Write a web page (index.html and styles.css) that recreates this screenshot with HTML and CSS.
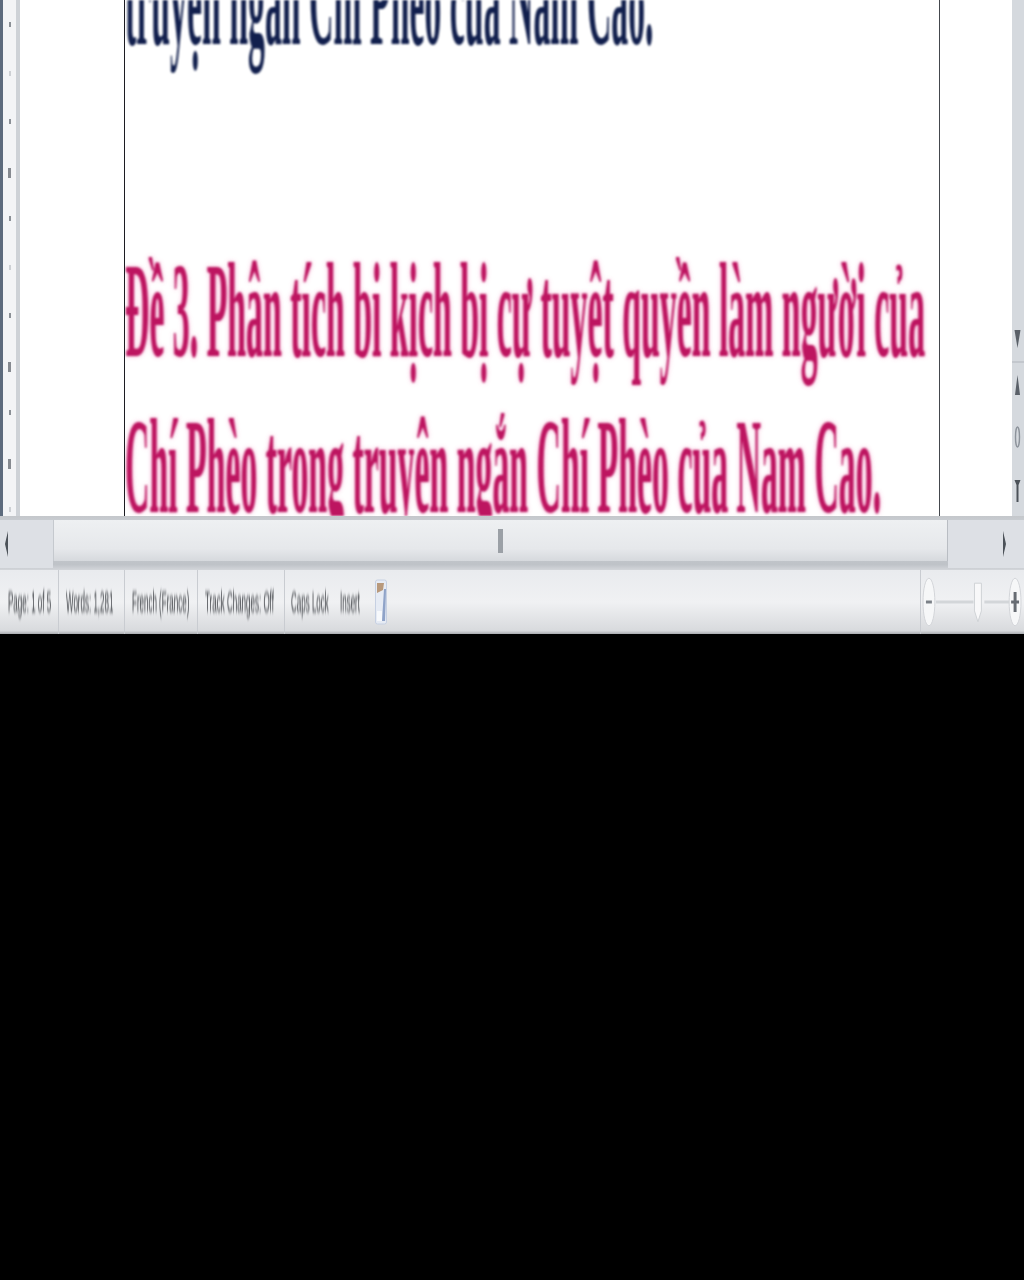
FILE: index.html
```html
<!DOCTYPE html>
<html lang="vi">
<head>
<meta charset="utf-8">
<title>Document</title>
<link rel="stylesheet" href="styles.css">
</head>
<body>
<div class="app">
  <div class="workspace">
    <div class="ruler">
      <i class="tick"></i><i class="tick light"></i><i class="tick"></i><i class="tick num"></i><i class="tick"></i><i class="tick light"></i><i class="tick"></i><i class="tick num"></i><i class="tick"></i><i class="tick num"></i><i class="tick light"></i>
    </div>
    <div class="gutter-left"></div>
    <div class="page">
      <div class="page-blur">
        <div class="page-text">
          <p class="line navy">truyện ngắn Chí Phèo của Nam Cao.</p>
          <p class="line">&nbsp;</p>
          <p class="line pink">Đề 3. Phân tích bi kịch bị cự tuyệt quyền làm người của</p>
          <p class="line pink">Chí Phèo trong truyện ngắn Chí Phèo của Nam Cao.</p>
        </div>
      </div>
    </div>
    <div class="gutter-right"></div>
    <div class="vscroll">
      <svg class="varrows" viewBox="0 0 12 190" width="12" height="190">
        <path d="M2.500 10h6l-3 18z" fill="#5a6068"/>
        <path d="M0 42h12" stroke="#bcc1c7" stroke-width="1.500"/>
        <path d="M5.500 55l2.500 20h-5z" fill="#5a6068"/>
        <ellipse cx="5.500" cy="117" rx="2" ry="10" fill="none" stroke="#8d939b" stroke-width="1.400"/>
        <path d="M2.500 160h6l-2 5v17h-2v-17z" fill="#4c5259"/>
      </svg>
    </div>
  </div>
  <div class="hscroll">
    <div class="hbtn left"><svg viewBox="0 0 8 30" width="8" height="30"><path d="M5 2v26L2 15z" fill="#4c5259"/></svg></div>
    <div class="hthumb"><i class="grip"></i></div>
    <div class="hbtn right"><svg viewBox="0 0 8 30" width="8" height="30"><path d="M3 2v26l3-13z" fill="#4c5259"/></svg></div>
  </div>
  <div class="status">
    <div class="cell w-page"><span>Page: 1 of 5</span></div>
    <div class="cell w-words"><span>Words: 1,281</span></div>
    <div class="cell w-lang"><span>French (France)</span></div>
    <div class="cell w-track"><span>Track Changes: Off</span></div>
    <div class="cell plain w-caps"><span>Caps Lock</span></div>
    <div class="cell plain w-insert"><span>Insert</span></div>
    <svg class="macro" viewBox="0 0 12 46" width="12" height="46">
      <rect x="0.500" y="1" width="11" height="44" rx="2" fill="#e6ebf4" stroke="#c6d0e2"/>
      <path d="M2 4h7l-1 7-6 3z" fill="#b8997c"/>
      <path d="M9 10l-2 32h3l1-32z" fill="#8fa3c8"/>
      <path d="M2 32h5v10H2z" fill="#f7f9fc"/>
    </svg>
    <div class="spacer"></div>
    <div class="zoom">
      <svg viewBox="0 0 104 56" width="104" height="56">
        <ellipse cx="8" cy="28" rx="6" ry="24" fill="#f6f7f8" stroke="#d2d5d9"/>
        <path d="M5 28h6" stroke="#7b8087" stroke-width="3"/>
        <path d="M15 28h38M64 28h31" stroke="#d3d6d9" stroke-width="3"/>
        <path d="M54 9h7v28l-3.500 11-3.500-11z" fill="#f8f8f9" stroke="#cfd2d6"/>
        <ellipse cx="95" cy="28" rx="6" ry="24" fill="#f6f7f8" stroke="#d2d5d9"/>
        <path d="M91 28h8M95 18v20" stroke="#666b72" stroke-width="3"/>
      </svg>
    </div>
  </div>
</div>
</body>
</html>
```
FILE: styles.css
```css
* { box-sizing: border-box; }
html, body { margin: 0; padding: 0; background: #000; }
body { width: 1024px; height: 1280px; overflow: hidden; }
.app { width: 1024px; height: 634px; display: flex; flex-direction: column; background: #d9dde2; }
.workspace { height: 516px; display: flex; background: #fff; overflow: hidden; }
.ruler { width: 20px; padding-top: 22px; border-left: 3px solid #5d6b7d; border-right: 4px solid #ced2d7; background: #f3f4f6; display: grid; grid-auto-rows: 48.500px; justify-items: center; }
.tick { display: block; width: 2px; height: 5px; background: #8b9096; }
.tick.light { background: #cdd0d4; }
.tick.num { height: 10px; width: 3px; background: #868a90; }
.gutter-left { width: 104px; background: #fff; }
.page { width: 816px; border-left: 1px solid #1c1c22; border-right: 1px solid #44474d; background: #fff; overflow: hidden; }
.page-blur { height: 100%; filter: blur(0.8px); overflow: hidden; }
.page-text { display: flow-root; width: 1200px; transform-origin: 0 0; transform: scale(1, 4); font-family: "Liberation Serif", serif; font-size: 33.800px; font-weight: 700; }
.line { margin: 0; height: 39px; line-height: 39px; white-space: nowrap; }
.navy { color: #111f4d; margin-top: -20.400px; }
.pink { color: #bd1560; text-shadow: 0 0 2px rgba(236, 90, 160, 0.55); }
.gutter-right { flex: 1; background: #fff; }
.vscroll { width: 12px; background: #d5d9de; padding-top: 320px; }
.varrows { display: block; }
.hscroll { height: 54px; padding: 4px 0 2px; display: flex; background: linear-gradient(#c4c7cb, #c9cdd2 10%, #bfc3c8 90%, #d3d6da); }
.hbtn { display: flex; align-items: center; background: #dde0e5; }
.hbtn.left { width: 53px; padding-left: 3px; }
.hbtn.right { flex: 1; padding-left: 52px; }
.hthumb { width: 895px; background: linear-gradient(#eef0f2, #e6e8eb 70%, #d6d9dd); border-left: 1px solid #c5c9ce; border-right: 1px solid #b9bdc3; display: flex; align-items: center; justify-content: center; margin-bottom: 7px; }
.grip { width: 5px; height: 24px; background: #9ba0a6; }
.status { height: 64px; display: flex; align-items: center; background: linear-gradient(#e9ebee, #f0f1f3 50%, #d8dadd 95%, #a9acb0); font-family: "Liberation Sans", sans-serif; font-size: 8px; color: #3f4247; }
.cell { height: 100%; display: flex; align-items: center; border-right: 1px solid #c9ccd1; }
.cell.plain { border-right: 0; }
.cell span { display: block; transform-origin: 0 50%; transform: scale(1, 3.750); filter: blur(0.6px); white-space: nowrap; }
.w-page { width: 59px; padding-left: 8px; }
.w-words { width: 66px; padding-left: 7px; }
.w-lang { width: 73px; padding-left: 7px; }
.w-track { width: 87px; padding-left: 7px; }
.w-caps { width: 49px; padding-left: 6px; }
.w-insert { width: 41px; padding-left: 6px; }
.macro { display: block; flex: none; }
.spacer { flex: 1; }
.zoom { width: 104px; height: 100%; border-left: 1px solid #c9ccd1; display: flex; align-items: center; }
.zoom svg { display: block; }
```
